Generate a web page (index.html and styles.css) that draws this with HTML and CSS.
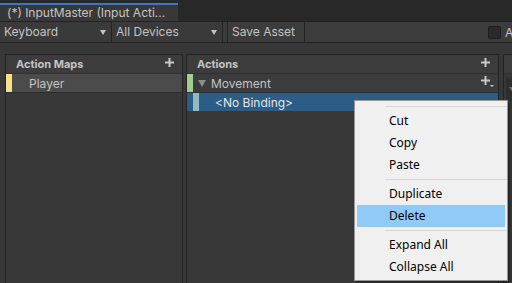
FILE: index.html
```html
<!DOCTYPE html>
<html lang="en">
<head>
    <meta charset="UTF-8">
    <title>InputMaster (Input Actions)</title>
    <link rel="stylesheet" href="styles.css">
</head>
<body>
    <div class="window">
        <div class="tabbar">
            <div class="tab">(*) InputMaster (Input Acti...</div>
        </div>

        <div class="toolbar">
            <div class="dropdown dropdown-scheme">Keyboard<span class="caret"></span></div>
            <div class="dropdown dropdown-devices">All Devices<span class="caret"></span></div>
            <div class="tool-button">Save Asset</div>
            <div class="toolbar-fill">
                <span class="checkbox"></span>
                <span class="check-label">A</span>
            </div>
        </div>

        <div class="panels">
            <div class="panel panel-maps">
                <div class="panel-header">
                    <span>Action Maps</span>
                    <svg class="plus" width="9" height="9" viewBox="0 0 9 9"><path d="M4.5 0V9M0 4.5H9" stroke="#c8c8c8" stroke-width="2"/></svg>
                </div>
                <div class="row row-map">
                    <span class="strip strip-yellow"></span>
                    <span class="row-label">Player</span>
                </div>
            </div>

            <div class="panel panel-actions">
                <div class="panel-header">
                    <span>Actions</span>
                    <svg class="plus" width="9" height="9" viewBox="0 0 9 9"><path d="M4.5 0V9M0 4.5H9" stroke="#c8c8c8" stroke-width="2"/></svg>
                </div>
                <div class="row row-action">
                    <span class="strip strip-green"></span>
                    <svg class="foldout" width="8" height="7" viewBox="0 0 8 7"><path d="M0 0H8L4 7Z" fill="#8c8c8c"/></svg>
                    <span class="row-label">Movement</span>
                    <svg class="plus-drop" width="13" height="12" viewBox="0 0 13 12"><path d="M4.5 0V9M0 4.5H9" stroke="#c8c8c8" stroke-width="2"/><path d="M9 9H13L11 11Z" fill="#c8c8c8"/></svg>
                </div>
                <div class="row row-binding">
                    <span class="strip strip-blue"></span>
                    <span class="row-label">&lt;No Binding&gt;</span>
                </div>
            </div>

            <div class="panel panel-props">
                <div class="panel-header"></div>
                <div class="props-field"><span class="props-caret"></span></div>
            </div>
        </div>

        <div class="context-menu">
            <div class="menu-sep"></div>
            <div class="menu-item">Cut</div>
            <div class="menu-item">Copy</div>
            <div class="menu-item">Paste</div>
            <div class="menu-sep"></div>
            <div class="menu-item">Duplicate</div>
            <div class="menu-item active">Delete</div>
            <div class="menu-sep"></div>
            <div class="menu-item">Expand All</div>
            <div class="menu-item">Collapse All</div>
        </div>
    </div>
</body>
</html>
```

FILE: styles.css
```css
body {
    margin: 0;
    padding: 0;
    background-color: #383838;
    font-family: Inter, "Noto Sans", sans-serif;
    font-size: 12px;
    color: #c4c4c4;
}
.window {
    position: relative;
    width: 512px;
    height: 283px;
    overflow: hidden;
}
.tabbar {
    height: 21px;
    background-color: #282828;
    display: flex;
    align-items: flex-end;
}
.tab {
    width: 171px;
    height: 16px;
    padding-left: 7px;
    border-top: 2px solid #3a78c0;
    background-color: #383838;
    line-height: 16px;
    white-space: nowrap;
}
.toolbar {
    height: 20px;
    display: flex;
    background-color: #3c3c3c;
    border-top: 1px solid #232323;
    border-bottom: 1px solid #232323;
}
.dropdown {
    position: relative;
    box-sizing: border-box;
    padding-left: 4px;
    line-height: 20px;
    border-right: 1px solid #232323;
    background-color: #3a3a3a;
}
.dropdown-scheme {
    width: 112px;
}
.dropdown-devices {
    width: 111px;
}
.caret {
    position: absolute;
    right: 5px;
    top: 8px;
    border-left: 3.5px solid transparent;
    border-right: 3.5px solid transparent;
    border-top: 5px solid #c4c4c4;
}
.tool-button {
    box-sizing: border-box;
    width: 78px;
    margin-left: 4px;
    padding-left: 4px;
    line-height: 20px;
    border-left: 1px solid #232323;
    border-right: 1px solid #232323;
}
.toolbar-fill {
    flex: 1;
    display: flex;
    align-items: center;
    justify-content: flex-end;
    gap: 4px;
    background-color: #3c3c3c;
}
.checkbox {
    box-sizing: border-box;
    width: 13px;
    height: 13px;
    border: 1px solid #1f1f1f;
    border-radius: 2px;
    background-color: #2a2a2a;
}
.check-label {
    width: 7px;
    overflow: hidden;
}
.panels {
    height: 229px;
    display: flex;
    padding: 11px 0 0 5px;
}
.panel {
    box-sizing: border-box;
    flex-shrink: 0;
    border: 1px solid #232323;
    border-bottom: none;
    background-color: #383838;
}
.panel-maps {
    width: 178px;
}
.panel-actions {
    width: 313px;
    margin-left: 3px;
}
.panel-props {
    flex: 1;
    margin-left: 4px;
}
.panel-header {
    height: 18px;
    display: flex;
    align-items: center;
    justify-content: space-between;
    padding: 0 8px 0 10px;
    background-color: #3c3c3c;
    border-bottom: 1px solid #303030;
    font-size: 11px;
    font-weight: bold;
}
.plus {
    margin-top: -4px;
}
.row {
    height: 18px;
    display: flex;
    align-items: center;
    border-bottom: 1px solid #2d2d2d;
}
.row-map {
    background-color: #4b4b4b;
}
.row-map .row-label {
    margin-left: 17px;
}
.row-action {
    background-color: #3c3c3c;
}
.row-binding {
    background-color: #2c5d87;
    color: #e6e6e6;
    border-bottom: none;
}
.strip {
    width: 6px;
    height: 100%;
}
.strip-yellow {
    background-color: #f7df8b;
}
.strip-green {
    background-color: #9fcf8f;
}
.strip-blue {
    background-color: #92bcc0;
    margin-left: 6px;
}
.foldout {
    margin-left: 5px;
}
.row-action .row-label {
    margin-left: 5px;
    flex: 1;
}
.plus-drop {
    margin-right: 4px;
    margin-top: -2px;
}
.row-binding .row-label {
    margin-left: 16px;
}
.props-field {
    height: 24px;
    margin-top: 3px;
    margin-left: 2px;
    background-color: #2e2e2e;
    position: relative;
}
.props-caret {
    position: absolute;
    left: 3px;
    top: 10px;
    border-left: 4px solid transparent;
    border-right: 4px solid transparent;
    border-top: 6px solid #6e6e6e;
}
.context-menu {
    position: absolute;
    left: 354px;
    top: 100px;
    width: 152px;
    padding: 2px 0;
    background-color: #f0f0f0;
    border: 1px solid #979797;
    box-shadow: 2px 2px 2px rgba(0, 0, 0, 0.35);
    font-family: "Noto Sans", sans-serif;
    font-size: 12px;
    color: #000;
}
.menu-sep {
    height: 7px;
    margin-left: 30px;
    background: linear-gradient(#f0f0f0 3px, #d7d7d7 3px, #d7d7d7 4px, #f0f0f0 4px);
}
.menu-item {
    height: 22px;
    line-height: 22px;
    margin: 0 2px;
    padding-left: 32px;
}
.menu-item.active {
    background-color: #91c9f7;
}
```
